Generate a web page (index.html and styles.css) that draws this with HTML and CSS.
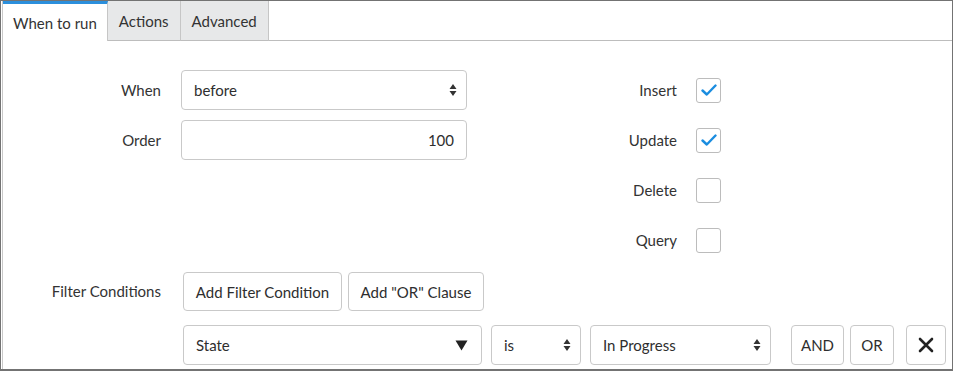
FILE: index.html
```html
<!DOCTYPE html>
<html lang="en">
<head>
    <meta charset="UTF-8">
    <title>Business Rule</title>
    <link rel="stylesheet" href="styles.css">
</head>
<body>
    <div class="frame">
        <div class="panel">
            <!-- Tabs -->
            <div class="tabs">
                <div class="tab active">When to run</div>
                <div class="tab">Actions</div>
                <div class="tab">Advanced</div>
                <div class="tab-fill"></div>
            </div>

            <!-- When / Order / operation flags -->
            <div class="form">
                <label class="label">When</label>
                <div class="select">
                    <span>before</span>
                    <svg class="updown" width="8" height="14" viewBox="0 0 8 14"><path d="M4 1 L7.5 6 H0.5 Z M4 13 L7.5 8 H0.5 Z" fill="#333"/></svg>
                </div>
                <label class="label">Insert</label>
                <div class="check on">
                    <svg width="16" height="12" viewBox="0 0 16 12"><path d="M1.5 6.5 L5.8 10.5 L14.5 1.5" fill="none" stroke="#1b8de0" stroke-width="2.4" stroke-linecap="round" stroke-linejoin="round"/></svg>
                </div>

                <label class="label">Order</label>
                <div class="input">100</div>
                <label class="label">Update</label>
                <div class="check on">
                    <svg width="16" height="12" viewBox="0 0 16 12"><path d="M1.5 6.5 L5.8 10.5 L14.5 1.5" fill="none" stroke="#1b8de0" stroke-width="2.4" stroke-linecap="round" stroke-linejoin="round"/></svg>
                </div>

                <div class="blank"></div>
                <div class="blank"></div>
                <label class="label">Delete</label>
                <div class="check"></div>

                <div class="blank"></div>
                <div class="blank"></div>
                <label class="label">Query</label>
                <div class="check"></div>
            </div>

            <!-- Filter conditions -->
            <div class="filter">
                <div class="filter-label">Filter Conditions</div>
                <div class="filter-body">
                    <div class="filter-actions">
                        <button class="btn btn-add">Add Filter Condition</button>
                        <button class="btn btn-or">Add "OR" Clause</button>
                    </div>
                    <div class="condition">
                        <div class="select field-name">
                            <span>State</span>
                            <svg width="13" height="11" viewBox="0 0 13 11"><path d="M0.5 0.5 H12.5 L6.5 10.5 Z" fill="#222"/></svg>
                        </div>
                        <div class="select operator">
                            <span>is</span>
                            <svg class="updown" width="8" height="14" viewBox="0 0 8 14"><path d="M4 1 L7.5 6 H0.5 Z M4 13 L7.5 8 H0.5 Z" fill="#333"/></svg>
                        </div>
                        <div class="select value">
                            <span>In Progress</span>
                            <svg class="updown" width="8" height="14" viewBox="0 0 8 14"><path d="M4 1 L7.5 6 H0.5 Z M4 13 L7.5 8 H0.5 Z" fill="#333"/></svg>
                        </div>
                        <button class="btn btn-and">AND</button>
                        <button class="btn btn-small-or">OR</button>
                        <button class="btn btn-remove">
                            <svg width="16" height="16" viewBox="0 0 16 16"><path d="M2 2 L14 14 M14 2 L2 14" stroke="#222" stroke-width="2.6" stroke-linecap="round"/></svg>
                        </button>
                    </div>
                </div>
            </div>
        </div>
    </div>
</body>
</html>
```

FILE: styles.css
```css
* {
    margin: 0;
    padding: 0;
    box-sizing: border-box;
}

html, body {
    height: 100%;
    background: #fff;
    font-family: Lato, "Liberation Sans", sans-serif;
    font-size: 15px;
    color: #2e2e2e;
}

/* Outer frame with the double left edge */
.frame {
    width: 953px;
    height: 371px;
    border: 1px solid #737373;
    border-bottom-width: 2px;
    padding-left: 1px;
    overflow: hidden;
}

.panel {
    height: 100%;
    border-left: 1px solid #c9c9c9;
}

/* Tabs */
.tabs {
    display: flex;
    height: 40px;
}

.tab {
    padding: 0 11px;
    line-height: 41px;
    white-space: nowrap;
    background: #e7e8e9;
    border-right: 1px solid #c6c6c6;
    border-bottom: 1px solid #bdbdbd;
    color: #333;
}

.tab.active {
    background: #fff;
    border-top: 3px solid #2b8fdc;
    border-bottom: none;
    line-height: 38px;
    padding: 0 10px;
}

.tab-fill {
    flex: 1;
    border-bottom: 1px solid #bdbdbd;
}

/* Main form grid */
.form {
    display: grid;
    grid-template-columns: 158px 286px 190px 25px;
    grid-auto-rows: 40px;
    column-gap: 20px;
    row-gap: 10px;
    padding-top: 29px;
    align-items: center;
}

.label {
    text-align: right;
    color: #333;
}

.select, .input {
    height: 40px;
    border: 1px solid #c9c9c9;
    border-radius: 4px;
    display: flex;
    align-items: center;
    justify-content: space-between;
    padding: 0 9px 0 12px;
    background: #fff;
}

.input {
    justify-content: flex-end;
    padding-right: 12px;
}

.check {
    width: 25px;
    height: 25px;
    border: 1px solid #bcbcbc;
    border-radius: 3px;
    display: flex;
    align-items: center;
    justify-content: center;
    margin-left: -1px;
}

/* Filter conditions */
.filter {
    display: flex;
    margin-top: 12px;
    column-gap: 22px;
}

.filter-label {
    width: 158px;
    text-align: right;
    line-height: 38px;
    color: #333;
}

.filter-actions {
    display: flex;
    gap: 6px;
}

.btn {
    height: 39px;
    border: 1px solid #c9c9c9;
    border-radius: 4px;
    background: #fff;
    font-family: inherit;
    font-size: 15px;
    color: #2e2e2e;
    display: flex;
    align-items: center;
    justify-content: center;
}

.btn-add {
    width: 159px;
}

.btn-or {
    width: 136px;
}

.condition {
    display: flex;
    margin-top: 14px;
}

.condition .select {
    height: 40px;
}

.field-name {
    width: 299px;
    padding-right: 13px;
}

.operator {
    width: 90px;
    margin-left: 9px;
}

.value {
    width: 181px;
    margin-left: 9px;
}

.btn-and {
    width: 53px;
    height: 40px;
    margin-left: 20px;
}

.btn-small-or {
    width: 44px;
    height: 40px;
    margin-left: 6px;
}

.btn-remove {
    width: 40px;
    height: 40px;
    margin-left: 12px;
}
```
